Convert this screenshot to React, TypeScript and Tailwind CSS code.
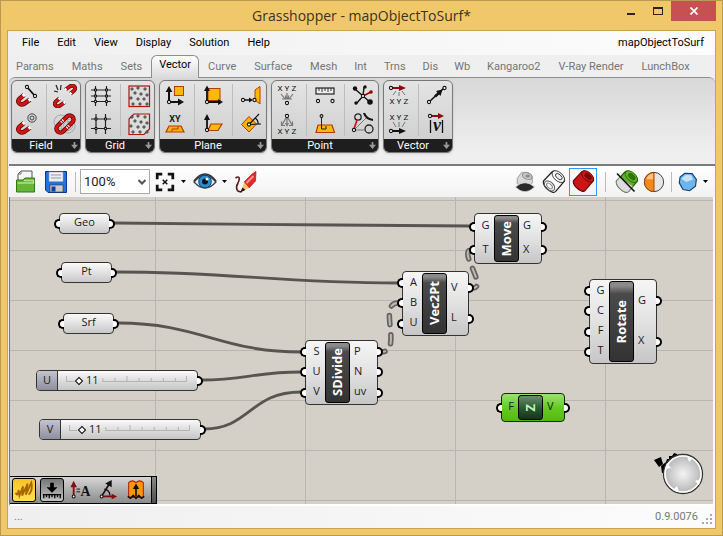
import React, { useState } from 'react';
import clsx from 'clsx';

const menus = ['File', 'Edit', 'View', 'Display', 'Solution', 'Help'];

const tabs = [
  'Params', 'Maths', 'Sets', 'Vector', 'Curve', 'Surface', 'Mesh', 'Int',
  'Trns', 'Dis', 'Wb', 'Kangaroo2', 'V-Ray Render', 'LunchBox',
];

/* ---------- small drawing helpers ---------- */

const Dot = ({ x, y, r = 1.6 }: { x: number; y: number; r?: number }) => (
  <circle cx={x} cy={y} r={r} fill="#fff" stroke="#111" strokeWidth="1.1" />
);

const Arrow = ({ d, head, color = '#111', w = 1.8 }: { d: string; head: string; color?: string; w?: number }) => (
  <>
    <path d={d} stroke={color} strokeWidth={w} fill="none" />
    <path d={head} fill={color} />
  </>
);

const Xyz = ({ y }: { y: number }) => (
  <>
    {['X', 'Y', 'Z'].map((c, i) => (
      <text key={c} x={5 + i * 7} y={y} fontSize="8" textAnchor="middle" fill="#111" fontFamily="Roboto, sans-serif">
        {c}
      </text>
    ))}
  </>
);

const Magnet = () => (
  <g fill="none">
    <path d="M9 11 L4.6 14.6 C1.5 18 5 22 9.5 19.6 L15 15.6" stroke="#5c0808" strokeWidth="4.6" />
    <path d="M8.6 11.4 L4.6 14.6 C1.5 18 5 22 9.5 19.6 L14.6 15.9" stroke="#d21414" strokeWidth="3" />
    <path d="M9.4 10.6 L7.8 12 M15.4 15.2 L13.6 16.6" stroke="#fff" strokeWidth="3.2" />
  </g>
);

const Scatter = () => (
  <>
    {[[5, 5], [11, 4], [18, 5], [8, 9], [14, 10], [20, 11], [4, 14], [11, 15], [17, 15], [6, 20], [13, 20], [20, 20]].map(([x, y]) => (
      <circle key={`${x}-${y}`} cx={x} cy={y} r="1.1" fill="#fff" stroke="#111" strokeWidth="0.9" />
    ))}
  </>
);

const Icon = ({ children, className = 'size-6' }: { children: React.ReactNode; className?: string }) => (
  <svg viewBox="0 0 24 24" className={clsx('shrink-0', className)} fill="none" aria-hidden="true">
    {children}
  </svg>
);

const DownArrows = () => (
  <g stroke="#777" strokeWidth="1.2">
    <path d="M6 10 L10 15 M12 9 V14 M18 10 L14 15" />
    <path d="M7 15 H10.5 V11.5 M17 15 H13.5 V11.5 M10.5 12.5 L12 15 L13.5 12.5" />
  </g>
);

const UpArrows = () => (
  <g stroke="#777" strokeWidth="1.2">
    <path d="M11 6 L7 13 M12 6 V13 M13 6 L17 13" />
    <path d="M6.5 9.5 V13.5 H10 M17.5 9.5 V13.5 H14 M10.5 11 L12 13.5 L13.5 11" />
  </g>
);

/* ---------- ribbon icons ---------- */

const icons: Record<string, React.ReactNode> = {
  'Line charge': (
    <>
      <Magnet />
      <path d="M12 3 L20 12" stroke="#111" strokeWidth="1.8" />
      <Dot x={12} y={3} />
      <Dot x={20} y={12} />
    </>
  ),
  'Point charge': (
    <>
      <Magnet />
      <g stroke="#444">
        <circle cx="17" cy="6" r="4.2" />
        <circle cx="17" cy="6" r="2" />
      </g>
    </>
  ),
  'Break field': (
    <>
      <g transform="translate(-1 5) scale(0.85)"><Magnet /></g>
      <g transform="rotate(180 12 12) translate(-1 5) scale(0.85)"><Magnet /></g>
      <path d="M3 1 L5 6 M8 1 L7.5 6 M1 7 L5 8" stroke="#222" strokeWidth="1.2" />
    </>
  ),
  'Merge fields': (
    <>
      <g stroke="#999" strokeWidth="0.8">
        <circle cx="8" cy="10" r="7" />
        <circle cx="15" cy="14" r="7" />
        <circle cx="15" cy="14" r="4.5" />
      </g>
      <g transform="rotate(-45 12 12)">
        <rect x="1.5" y="8" width="21" height="8" rx="4" stroke="#5c0808" strokeWidth="4.4" />
        <rect x="1.5" y="8" width="21" height="8" rx="4" stroke="#d21414" strokeWidth="2.8" />
        <path d="M10.5 8 H13.5 M10.5 16 H13.5" stroke="#fff" strokeWidth="2.8" />
        <path d="M12 6 V10 M12 14 V18" stroke="#5c0808" />
      </g>
    </>
  ),
  'Rectangular grid': (
    <>
      <path d="M2 6 H22 M2 12 H22 M2 17.5 H22 M6.5 2 V22 M17.5 2 V22" stroke="#222" strokeWidth="1.2" />
      {[6, 12, 17.5].map((y) => (
        <React.Fragment key={y}><Dot x={6.5} y={y} r={1.1} /><Dot x={17.5} y={y} r={1.1} /></React.Fragment>
      ))}
    </>
  ),
  'Square grid': (
    <>
      <path d="M2 7 H22 M2 16.5 H22 M7 2 V22 M16.5 2 V22" stroke="#222" strokeWidth="1.2" />
      {[7, 16.5].map((y) => (
        <React.Fragment key={y}><Dot x={7} y={y} r={1.1} /><Dot x={16.5} y={y} r={1.1} /></React.Fragment>
      ))}
    </>
  ),
  'Populate 2D': (
    <>
      <rect x="2" y="2" width="20.5" height="20.5" fill="#dcdcdc" stroke="#b01212" strokeWidth="1.2" />
      <Scatter />
    </>
  ),
  'Populate 3D': (
    <>
      <path d="M2 7 L7 2 H22.5 V17 L17 22.5 H2 Z" fill="#dcdcdc" stroke="#b01212" strokeWidth="1.2" />
      <Scatter />
    </>
  ),
  'Plane normal': (
    <>
      <rect x="11.5" y="2.5" width="9" height="9" fill="#ffb800" stroke="#b83a00" />
      <Arrow d="M6 16 V6" head="M2.6 8 L6 2 L9.4 8 Z" w={2} />
      <Arrow d="M7 18 H16" head="M15 14.6 L21 18 L15 21.4 Z" w={2} />
      <Dot x={6} y={18} />
    </>
  ),
  'XY plane': (
    <>
      <text x="12" y="10" fontSize="9" fontWeight="bold" textAnchor="middle" fill="#222" fontFamily="Roboto, sans-serif">XY</text>
      <path d="M6 14 H18 L21 20 H3 Z" fill="#ffb000" stroke="#b83a00" strokeWidth="1.2" />
      <path d="M9 20 V17 H15 V14" stroke="#b83a00" />
    </>
  ),
  'Plane origin': (
    <>
      <rect x="7" y="4.5" width="12" height="12" fill="#ffb800" stroke="#b83a00" />
      <Arrow d="M6 17 V6" head="M3 7 L6 1.5 L9 7 Z" />
      <Arrow d="M7 18 H17" head="M17 15 L22 18 L17 21 Z" />
      <Dot x={6} y={18} />
    </>
  ),
  'Plane offset': (
    <>
      <path d="M10 12 H21 L17 18.5 H7 Z" fill="#ffb800" stroke="#b83a00" strokeWidth="1.2" />
      <Arrow d="M6 17 V6" head="M3 8 L6 2 L9 8 Z" />
      <Dot x={6} y={18} />
    </>
  ),
  'Align plane': (
    <>
      <path d="M21 2.5 V20 L16 16 V6 Z" fill="#ffb800" stroke="#b83a00" />
      <Arrow d="M4 16 H11" head="M10 13.4 L14 16 L10 18.6 Z" w={1.4} />
      <Dot x={4} y={16} />
      <Dot x={15.5} y={16} />
    </>
  ),
  'Rotate plane': (
    <>
      <path d="M10 4.5 L17.5 12 L10 20 L2.5 12.5 Z" fill="#ffb000" stroke="#b83a00" />
      <path d="M10 12.5 L20 2 M10 12.5 L22 12 M16 6 Q19.5 8 19 12" stroke="#111" strokeWidth="1.1" />
      <Dot x={10} y={12.5} />
    </>
  ),
  Deconstruct: (<><Xyz y={7} /><DownArrows /><Dot x={12} y={19} /></>),
  'Construct point': (<><UpArrows /><Dot x={12} y={4} /><Xyz y={22} /></>),
  Distance: (
    <>
      <rect x="3" y="4" width="18" height="6" fill="#eee" stroke="#222" strokeWidth="1.2" />
      <path d="M6 4 V7 M9 4 V8 M12 4 V7 M15 4 V8 M18 4 V7" stroke="#222" strokeWidth="0.9" />
      <Dot x={5} y={17} />
      <Dot x={19.5} y={17} />
    </>
  ),
  'Project point': (
    <>
      <path d="M5 13 H19 L21.5 20.5 H3 Z" fill="#ffb800" stroke="#b83a00" strokeWidth="1.2" />
      <path d="M8.5 4 V17 H13 V14" stroke="#222" />
      <Dot x={8.5} y={4} r={1.4} />
    </>
  ),
  'Closest points': (
    <>
      <path d="M12 12 L4 5 M12 12 L13 3 M12 12 L5 20 M12 12 L20 19" stroke="#111" strokeWidth="1.4" />
      <path d="M12 12 L20 8" stroke="#900" strokeWidth="1.4" />
      <g fill="#111">
        <circle cx="4" cy="4.5" r="2.2" /><circle cx="14" cy="3" r="1.7" />
        <circle cx="5" cy="19" r="1.7" /><circle cx="19" cy="18" r="2.8" />
      </g>
      <circle cx="20" cy="8" r="1.8" fill="#900" />
      <Dot x={12} y={12} />
    </>
  ),
  'Pull point': (
    <>
      <circle cx="7" cy="5" r="3.2" stroke="#222" strokeWidth="1.3" />
      <circle cx="18" cy="17" r="4" stroke="#222" strokeWidth="1.3" />
      <path d="M13 1 Q15 7 22 8" stroke="#111" strokeWidth="2.2" />
      <path d="M3 18 L15 6 M4 18 H14" stroke="#777" />
      <path d="M3 17 L6 8" stroke="#d01010" strokeWidth="1.7" />
      <Dot x={3} y={18} />
    </>
  ),
  'Deconstruct vector': (
    <>
      <Arrow d="M4 4 H14" head="M12 1 L19 4 L12 7 Z" color="#8c0c0c" w={2} />
      <Dot x={4} y={4} />
      <path d="M9 7 L6 11 M12 8 V12 M15 7 L18 11" stroke="#777" />
      <Xyz y={20} />
    </>
  ),
  'Vector XYZ': (
    <>
      <Xyz y={8} />
      <path d="M6 10 L9 15 M12 10 V15 M18 10 L15 15" stroke="#777" />
      <Arrow d="M4 19 H14" head="M12 16 L19 19 L12 22 Z" w={2} />
      <Dot x={4} y={19} />
    </>
  ),
  'Vector 2Pt': (
    <>
      <path d="M4 18 L19 4" stroke="#111" strokeWidth="1.6" />
      <path d="M10 12.5 L15 8" stroke="#111" strokeWidth="2.6" />
      <path d="M17.5 5.5 L15.5 12 L11 7 Z" fill="#111" />
      <Dot x={4} y={18} />
      <Dot x={19.5} y={4} />
    </>
  ),
  Amplitude: (
    <>
      <Arrow d="M5 4 H14" head="M13 1 L19 4 L13 7 Z" color="#8c0c0c" w={2} />
      <Dot x={5} y={4} />
      <path d="M5.5 8 V21 M17.5 8 V21" stroke="#111" strokeWidth="1.3" />
      <text x="12" y="19" fontSize="18" fontStyle="italic" fontWeight="bold" textAnchor="middle" fill="#111" fontFamily="Liberation Serif, serif">v</text>
    </>
  ),
};

const groups = [
  { name: 'Field', cols: [['Line charge', 'Point charge'], ['Break field', 'Merge fields']] },
  { name: 'Grid', cols: [['Rectangular grid', 'Square grid'], ['Populate 2D', 'Populate 3D']] },
  { name: 'Plane', cols: [['Plane normal', 'XY plane'], ['Plane origin', 'Plane offset'], ['Align plane', 'Rotate plane']] },
  { name: 'Point', cols: [['Deconstruct', 'Construct point'], ['Distance', 'Project point'], ['Closest points', 'Pull point']] },
  { name: 'Vector', cols: [['Deconstruct vector', 'Vector XYZ'], ['Vector 2Pt', 'Amplitude']] },
];

const TitleBar = () => (
  <header className="relative flex h-[30px] shrink-0 items-start justify-center">
    <h1 className="pt-[5px] font-['Open_Sans',sans-serif] text-[14px] leading-5 text-[#3a3222]">
      Grasshopper - mapObjectToSurf*
    </h1>
    <div className="absolute top-0 right-0 flex h-5">
      <button aria-label="Minimize" className="flex w-7 items-end justify-center pb-1.5">
        <span className="h-[2px] w-2 bg-[#2b2519]" />
      </button>
      <button aria-label="Maximize" className="flex w-[26px] items-center justify-center">
        <span className="h-2 w-2.5 border border-t-2 border-[#2b2519]" />
      </button>
      <button aria-label="Close" className="flex w-[45px] items-center justify-center bg-[#c75050]">
        <svg viewBox="0 0 8 8" className="size-2" stroke="#fff" strokeWidth="1.7">
          <path d="M0.5 0.5 L7.5 7.5 M7.5 0.5 L0.5 7.5" />
        </svg>
      </button>
    </div>
  </header>
);

const MenuBar = () => (
  <nav className="flex h-6 shrink-0 items-center bg-linear-to-r from-[#f0f0f0] to-[#fcfcfc] pr-[11px] pl-1 text-[11px] text-black">
    {menus.map((m) => (
      <button key={m} className="px-[9px]">{m}</button>
    ))}
    <span className="ml-auto">mapObjectToSurf</span>
  </nav>
);

interface TabBarProps {
  active: string;
  onSelect: (tab: string) => void;
}

const TabBar: React.FC<TabBarProps> = ({ active, onSelect }) => (
  <div role="tablist" className="relative z-10 -mb-px flex h-[23px] shrink-0 items-end text-[11px] whitespace-nowrap text-[#757575]">
    {tabs.map((t) => (
      <button
        key={t}
        role="tab"
        aria-selected={t === active}
        onClick={() => onSelect(t)}
        className={clsx(
          t === active
            ? 'h-[23px] rounded-t-md border border-b-0 border-[#8e8e8e] bg-linear-to-b from-white to-[#dadada] px-[7px] pb-1 text-black'
            : 'h-[22px] first:pl-[7px]',
          t !== active && (t.length > 3 ? 'px-[9px]' : 'px-2')
        )}
      >
        {t}
      </button>
    ))}
  </div>
);

const Ribbon = () => (
  <section className="shrink-0 pb-[11px]">
    <div className="flex gap-1 rounded-t-md border-t border-[#8e8e8e] bg-linear-to-b from-[#d8d8d8] to-[#efefef] pt-0.5 pl-0.5">
      {groups.map((g) => (
        <div key={g.name} className="overflow-hidden rounded-md border border-[#777] bg-linear-to-b from-[#e4e4e4] to-[#cccccc] shadow-sm">
          <div className="flex py-[3px] pr-[3px] pl-[3px]">
            {g.cols.map((col, i) => (
              <div key={i} className="flex flex-col gap-1 border-[#bdbdbd] not-first:border-l not-first:pl-1.5 not-last:pr-[7px]">
                {col.map((name) => (
                  <button key={name} aria-label={name} title={name}>
                    <Icon>{icons[name]}</Icon>
                  </button>
                ))}
              </div>
            ))}
          </div>
          <div className="relative flex h-[13px] items-center justify-center bg-[#1e1e1e] text-[11px] leading-none text-white">
            <span className="pr-2.5">{g.name}</span>
            <svg viewBox="0 0 8 8" className="absolute right-[2px] size-[7px]" fill="#999">
              <path d="M3 0 H5 V3 H8 L4 8 L0 3 H3 Z" />
            </svg>
          </div>
        </div>
      ))}
    </div>
  </section>
);

/* ---------- canvas toolbar ---------- */

const Caret = () => (
  <svg viewBox="0 0 5 3" className="h-[3px] w-[5px]" fill="#000"><path d="M0 0 H5 L2.5 3 Z" /></svg>
);

const Separator = () => <span className="h-5 w-px bg-[#bbb]" />;

const Tube = ({ fill, inner, stroke }: { fill: string; inner: string; stroke: string }) => (
  <>
    <path d="M1.5 11 L10 2 C13 -1 23 5.5 22.5 11 L13.5 21.5 C11 25 0 16.5 1.5 11 Z" fill={fill} stroke={stroke} strokeWidth="1.2" />
    <ellipse cx="16.3" cy="6.6" rx="7.4" ry="4.3" transform="rotate(42 16.3 6.6)" fill={fill} stroke={stroke} strokeWidth="0.8" />
    <ellipse cx="16.8" cy="6.6" rx="4" ry="2.2" transform="rotate(42 16.8 6.6)" fill={inner} stroke={stroke} strokeWidth="0.8" />
  </>
);

const Toolbar = () => (
  <div className="flex h-[33px] shrink-0 items-center border-t-2 border-[#7b7b7b] bg-linear-to-b from-white to-[#f2f2f2] pl-[5px]">
    <button aria-label="Open">
      <Icon>
        <path d="M4 12 V4 L7 1 H18 V12" fill="#f6f6f6" stroke="#555" />
        <path d="M4 4 H7 V1" stroke="#777" />
        <path d="M2.5 22 V10 H9 L11 8 H20.5 V22 Z" fill="#68b436" stroke="#2c7a12" />
        <path d="M3.5 13 H19.5 V10.5 H10" stroke="#b3e08c" strokeWidth="1.5" />
      </Icon>
    </button>
    <button aria-label="Save" className="ml-1.5">
      <Icon>
        <path d="M1.5 1.5 H22.5 V22.5 H4 L1.5 20 Z" fill="#2272e0" stroke="#0b3a94" />
        <rect x="5" y="2" width="14" height="9.5" fill="#eee" stroke="#9ab" strokeWidth="0.5" />
        <path d="M7 5 H17 M7 8 H17" stroke="#999" />
        <rect x="6" y="15" width="13" height="7" fill="#ccc" stroke="#333" strokeWidth="0.6" />
        <rect x="7.5" y="16.5" width="4" height="5" fill="#123f9a" />
      </Icon>
    </button>
    <div className="ml-[7px] flex items-center gap-1">
      <Separator />
      <div className="relative">
        <select
          aria-label="Zoom"
          defaultValue="100%"
          className="block h-[25px] w-[70px] appearance-none border border-[#aaa] bg-white pl-[3px] text-[13px] text-[#222]"
        >
          <option>50%</option>
          <option>100%</option>
          <option>200%</option>
        </select>
        <svg viewBox="0 0 8 6" className="pointer-events-none absolute top-[10px] right-1 h-[6px] w-2" fill="none" stroke="#555" strokeWidth="2">
          <path d="M0.5 1 L4 4.5 L7.5 1" />
        </svg>
      </div>
    </div>
    <button aria-label="Zoom extents" className="ml-1 flex items-center gap-[5px]">
      <Icon className="size-[22px]">
        <path d="M3.5 9 V3.5 H9 M15 3.5 H20.5 V9 M20.5 15 V20.5 H15 M9 20.5 H3.5 V15" stroke="#111" strokeWidth="3" />
        <path d="M9.5 9.5 L14.5 14.5 M14.5 9.5 L9.5 14.5" stroke="#111" strokeWidth="1.6" />
      </Icon>
      <Caret />
    </button>
    <button aria-label="Named views" className="ml-[7px] flex items-center gap-[5px]">
      <Icon>
        <path d="M1 12 Q12 -1 23 12 Q12 24 1 12 Z" fill="#e9eef2" stroke="#3b4750" strokeWidth="1.3" />
        <circle cx="12" cy="11.5" r="6.3" fill="#2b90d0" stroke="#0c4470" />
        <circle cx="12" cy="11.5" r="3" fill="#06131d" />
        <circle cx="14" cy="9" r="1.5" fill="#fff" />
        <path d="M1 11 Q12 -3 23 11" stroke="#333" strokeWidth="1.7" />
      </Icon>
      <Caret />
    </button>
    <button aria-label="Sketch" className="ml-1.5">
      <Icon>
        <path d="M2.5 8 C7 5 7 9 5 13 C2 18 4 23 9 21.5" stroke="#5b1717" strokeWidth="1.6" />
        <path d="M11 12 L19 4 L23 1.500 L22.5 11 L16 18 Z" fill="#e42828" stroke="#9b1111" strokeWidth="0.6" />
        <path d="M13.5 13 L20.5 6" stroke="#ff9494" strokeWidth="2" />
        <path d="M11 12 L16 18 L8.5 21.5 Z" fill="#f2c36b" />
        <path d="M9.5 17.5 L12.5 20 L7 22.5 Z" fill="#331010" />
      </Icon>
    </button>

    <div className="ml-auto flex items-center pr-px">
      <button aria-label="No preview" className="mr-[6px]">
        <Icon className="size-[22px]">
          <path d="M3.5 14 V8 L8 2 C12 0 20 3 20 7 V13 L16 17 Z" fill="#d9d9d9" stroke="#999" />
          <ellipse cx="14.5" cy="5.5" rx="5.5" ry="3.5" transform="rotate(20 14.5 5.5)" fill="#c4c4c4" stroke="#888" />
          <ellipse cx="15" cy="5.5" rx="2.5" ry="1.5" fill="#888" />
          <path d="M1.5 17.5 Q12 8 22.5 17.5 Q12 28 1.5 17.5 Z" fill="#2a2a2a" stroke="#eee" strokeWidth="0.8" />
        </Icon>
      </button>
      <button aria-label="Wireframe preview" className="mr-[3px]">
        <Icon>
          <Tube fill="#fafafa" inner="#eee" stroke="#222" />
          <ellipse cx="7.5" cy="16" rx="6" ry="4" transform="rotate(42 7.5 16)" stroke="#555" />
          <ellipse cx="7.5" cy="16" rx="3.5" ry="2" transform="rotate(42 7.5 16)" stroke="#888" />
        </Icon>
      </button>
      <button aria-label="Shaded preview" aria-pressed="true" className="mr-2 flex size-7 items-center justify-center border border-[#3297fd]">
        <Icon className="size-[23px]"><Tube fill="#cc1515" inner="#7d0808" stroke="#5e0606" /></Icon>
      </button>
      <Separator />
      <button aria-label="Selected preview" className="mr-1 ml-[9px]">
        <Icon>
          <Tube fill="#5eb51f" inner="#2f7a08" stroke="#285f0a" />
          <path d="M5 7 L1.5 11 C0 16.5 11 25 13.5 21.5 L18 16 Z" fill="#ddd" stroke="#888" />
          <path d="M2 3.5 L19.5 21.5" stroke="#111" strokeWidth="1.6" />
        </Icon>
      </button>
      <button aria-label="Document preview" className="mr-1.5">
        <Icon className="size-[22px]">
          <circle cx="12" cy="12" r="10.5" fill="#e6e6e6" stroke="#333" />
          <path d="M12 1.5 A10.5 10.5 0 0 0 12 22.5 Z" fill="#ef8b1d" stroke="#9b3d05" />
          <path d="M3.5 9 Q6 3 11 2.8 V9 Z" fill="#ffc27a" />
        </Icon>
      </button>
      <Separator />
      <button aria-label="Mesh quality" className="mr-[6px] ml-1.5 flex items-center gap-[5px]">
        <Icon className="size-5">
          <path d="M8 1.5 L17 2 L22 9 L21 17 L14 22.5 L6 21 L1.5 13 L2.5 6 Z" fill="#6fb4ee" stroke="#14406f" strokeWidth="1.4" />
          <path d="M4 8 L9 3.5 L16 4 L18 9 L10 12 Z" fill="#c4e2fb" />
        </Icon>
        <Caret />
      </button>
    </div>
  </div>
);

/* ---------- definition canvas ---------- */

const Port = ({ side }: { side: 'in' | 'out' }) => (
  <span
    className={clsx(
      'absolute top-1/2 h-[10px] w-1.5 -translate-y-1/2 border-2 border-black bg-white',
      side === 'in' ? '-left-[6px] rounded-l-full border-r-0' : '-right-[6px] rounded-r-full border-l-0'
    )}
  />
);

interface ComponentNode {
  name: string;
  at: string;
  inputs: string[];
  outputs: string[];
  selected?: boolean;
}

const components: ComponentNode[] = [
  { name: 'Move', at: 'left-[464px] top-[16px] h-[51px] w-[68px]', inputs: ['G', 'T'], outputs: ['G', 'X'] },
  { name: 'Vec2Pt', at: 'left-[392px] top-[74px] h-[65px] w-[67px]', inputs: ['A', 'B', 'U'], outputs: ['V', 'L'] },
  { name: 'SDivide', at: 'left-[295px] top-[143px] h-[65px] w-[73px]', inputs: ['S', 'U', 'V'], outputs: ['P', 'N', 'uv'] },
  { name: 'Rotate', at: 'left-[579px] top-[82px] h-[85px] w-[68px]', inputs: ['G', 'C', 'F', 'T'], outputs: ['G', 'X'] },
  { name: 'Z', at: 'left-[491px] top-[196px] h-[29px] w-[64px]', inputs: ['F'], outputs: ['V'], selected: true },
];

const params = [
  { name: 'Geo', at: 'left-[49px] top-[16px]' },
  { name: 'Pt', at: 'left-[51px] top-[65px]' },
  { name: 'Srf', at: 'left-[53px] top-[116px]' },
];

const sliders = [
  { name: 'U', at: 'left-[26px] top-[173px]' },
  { name: 'V', at: 'left-[29px] top-[222px]' },
];

const wires = [
  'M104 26 C230 26 340 29 460 29',
  'M106 75 C220 75 270 86 388 86',
  'M108 126 C190 126 210 155 291 155',
  'M191 183 C235 183 245 175 291 175',
  'M194 232 C240 232 240 195 291 195',
];

const dashedWires = [
  'M371 155 C394 155 367 106 388 106',
  'M463 91 C478 91 448 53 461 53',
];

const ParamNode = ({ name, at }: { name: string; at: string }) => (
  <div className={clsx('absolute flex h-[21px] w-[51px] items-center justify-center rounded border border-[#333] bg-linear-to-b from-[#fafafa] via-[#e2e2e2] to-[#c8c8c8] pb-1', at)}>
    <Port side="in" />
    {name}
    <Port side="out" />
  </div>
);

const SliderNode = ({ name, at }: { name: string; at: string }) => {
  const [value, setValue] = useState(11);
  return (
    <div className={clsx('absolute flex h-[21px] w-[162px] rounded border border-[#333] bg-linear-to-b from-[#fafafa] via-[#dedede] to-[#c6c6c6]', at)}>
      <label htmlFor={`slider-${name}`} className="flex w-[21px] items-center justify-center rounded-l-[3px] border-r border-[#333] bg-linear-to-b from-[#c4c4d0] to-[#8f8f9f] pb-0.5">
        {name}
      </label>
      <div className="relative mr-2.5 ml-2 flex-1">
        <svg viewBox="0 0 120 19" preserveAspectRatio="none" className="absolute inset-0 h-full w-full" stroke="#b4b4b4">
          <path d="M0.5 5 V10.5 H8 M36 10.5 H119.5 M36.5 7 V10.5 M48.5 7 V10.5 M60.5 5 V10.5 M72.5 7 V10.5 M84.5 7 V10.5 M96.5 7 V10.5 M108.5 7 V10.5 M119.5 5 V10.5" fill="none" />
        </svg>
        <input
          id={`slider-${name}`}
          type="range"
          min={0}
          max={128}
          value={value}
          onChange={(e) => setValue(Number(e.target.value))}
          className="absolute inset-0 h-full w-full appearance-none bg-transparent [&::-webkit-slider-thumb]:size-[6px] [&::-webkit-slider-thumb]:rotate-45 [&::-webkit-slider-thumb]:appearance-none [&::-webkit-slider-thumb]:border-[1.5px] [&::-webkit-slider-thumb]:border-black [&::-webkit-slider-thumb]:bg-white"
        />
        <span className="pointer-events-none absolute inset-y-0 left-5 flex items-center pb-0.5">{value}</span>
      </div>
      <Port side="out" />
    </div>
  );
};

const ComponentBox: React.FC<ComponentNode> = ({ name, at, inputs, outputs, selected }) => (
  <div
    className={clsx(
      'absolute flex rounded border bg-linear-to-b py-px',
      selected ? 'border-[#0c3000] from-[#9be36a] via-[#64cb1f] to-[#55b813]' : 'border-[#333] from-[#f6f6f6] via-[#e2e2e2] to-[#c6c6c6]',
      at
    )}
  >
    <div className={clsx('flex flex-col', selected ? 'w-4' : 'w-[19px]')}>
      {inputs.map((p) => (
        <div key={p} className="relative flex flex-1 items-center justify-center pb-1 pl-0.5">
          <Port side="in" />
          {p}
        </div>
      ))}
    </div>
    <div
      className={clsx(
        'flex w-[25px] items-center justify-center rounded-[3px] border border-black bg-linear-to-b',
        selected ? 'from-[#6b8f6b] via-[#2f5a33] to-[#16331a]' : 'from-[#8a8a8a] from-5% via-[#4a4a4a] via-15% to-[#333333]'
      )}
    >
      <span className={clsx('rotate-180 text-[13px] leading-none font-bold [writing-mode:vertical-rl]', selected ? 'text-[#b8f5b0]' : 'text-white')}>
        {name}
      </span>
    </div>
    <div className="flex flex-1 flex-col">
      {outputs.map((p) => (
        <div key={p} className="relative flex flex-1 items-center pb-1 pl-1">
          {p}
          <Port side="out" />
        </div>
      ))}
    </div>
  </div>
);

const Compass = () => (
  <svg viewBox="0 0 50 44" className="absolute right-[9px] bottom-2 h-11 w-[50px]" fill="none">
    <path d="M0 8 L7 5 L9 12 L5 15 Z M8 21 L7 14 L12 10 L13 7 L15 7 L15 4 L18 4 L20 1 L23 2 L24 8 L12 20 Z" fill="#000" />
    <defs>
      <radialGradient id="dial">
        <stop offset="0" stopColor="#f4f4f4" />
        <stop offset="1" stopColor="#b4b4b4" />
      </radialGradient>
    </defs>
    <circle cx="29" cy="22" r="19.5" fill="url(#dial)" stroke="#333" strokeWidth="1.3" />
    <circle cx="29" cy="22" r="18" stroke="#fff" strokeWidth="1.6" />
    <path d="M33 4 L39 6 L35 10 Z M47 27 L45 33 L41 29 Z M25 40 L19 38 L23 34 Z M11 17 L13 11 L17 16 Z" fill="#fff" />
  </svg>
);

const MarkovBar = () => (
  <div className="absolute bottom-0 -left-px flex h-7 w-[148px] items-center border border-black bg-linear-to-b from-[#d6d6d6] to-[#8b8b8b] pl-0.5">
    <button aria-label="Scribble" className="rounded-[3px] border border-black bg-linear-to-b from-[#f7c326] to-[#ffe04d]">
      <Icon className="size-[22px]">
        <path d="M3 15 Q5 20 6 12 L7 18 L11 8 L10 18 L16 5 L14 17 L20 4 Q22 12 17 17" stroke="#a86505" strokeWidth="2" />
      </Icon>
    </button>
    <button aria-label="Bake" className="ml-1 rounded-[3px] border border-black bg-linear-to-b from-[#777] to-[#c4c4c4]">
      <Icon className="size-[22px]">
        <path d="M10 4 H14 V9 H18 L12 15 L6 9 H10 Z" fill="#000" />
        <path d="M2 17 H22 M3 17 V21 M6 17 V20 M9 17 V21 M12 17 V20 M15 17 V21 M18 17 V20 M21 17 V21" stroke="#000" strokeWidth="1.4" />
      </Icon>
    </button>
    <button aria-label="Amplitude" className="ml-1.5">
      <Icon className="size-[22px]">
        <Arrow d="M4 18 V7" head="M0.5 9 L4 2 L7.5 9 Z" color="#850c0c" w={2} />
        <Dot x={4} y={19} />
        <path d="M7 11 H11 M7 14 H11" stroke="#111" />
        <text x="17" y="19" fontSize="15" fontWeight="bold" textAnchor="middle" fill="#111" fontFamily="Liberation Serif, serif">A</text>
      </Icon>
    </button>
    <button aria-label="Rotate" className="ml-[5px]">
      <Icon className="size-[22px]">
        <Arrow d="M5 19 L13 6" head="M9 5 L16 1 L16 9 Z" />
        <Arrow d="M5 19 H17" head="M16 16 L22 19 L16 22 Z" color="#850c0c" w={2} />
        <path d="M8 11 Q14 12 14 18" stroke="#111" strokeWidth="1.3" />
        <Dot x={5} y={19} />
      </Icon>
    </button>
    <button aria-label="Extrude" className="ml-[6px]">
      <Icon className="size-[22px]">
        <path d="M4 20 V4 Q8 0 12 4 Q16 0 20 4 V20 Z" fill="#ff9800" stroke="#b02800" strokeWidth="1.2" />
        <path d="M3 19 L6 21 L9 18 L12 21 L15 18 L18 21 L21 19" stroke="#111" strokeWidth="1.8" />
        <Arrow d="M12 19 V9" head="M8.5 11 L12 5 L15.5 11 Z" />
      </Icon>
    </button>
    <span className="ml-auto h-full w-[5px] border-l border-black bg-linear-to-b from-[#888] to-[#4f4f4f]" />
  </div>
);

const Canvas = () => (
  <main className="relative min-h-0 flex-1 overflow-hidden border-r-2 border-b-2 border-l border-r-white border-b-white border-l-[#777] bg-[#d4d0c8] font-['Open_Sans',sans-serif] text-[11px] leading-none text-[#1b1b1b]">
    <svg className="absolute inset-0 h-full w-full" fill="none">
      <defs>
        <pattern id="grid" x="145" y="3" width="150" height="50" patternUnits="userSpaceOnUse">
          <path d="M0.5 0 V50 M0 0.5 H150" stroke="#b9b6af" />
        </pattern>
      </defs>
      <rect width="100%" height="100%" fill="url(#grid)" />
      {wires.map((d) => <path key={d} d={d} stroke="#575550" strokeWidth="2.8" />)}
      {dashedWires.map((d) => (
        <g key={d} strokeLinecap="round" strokeDasharray="9 10" strokeDashoffset="5">
          <path d={d} stroke="#666460" strokeWidth="5.5" />
          <path d={d} stroke="#bcb9b2" strokeWidth="2" />
        </g>
      ))}
    </svg>
    {params.map((p) => <ParamNode key={p.name} {...p} />)}
    {sliders.map((s) => <SliderNode key={s.name} {...s} />)}
    {components.map((c) => <ComponentBox key={c.name} {...c} />)}
    <MarkovBar />
    <Compass />
  </main>
);

const StatusBar = () => (
  <footer className="flex h-[22px] shrink-0 items-center justify-between bg-linear-to-r from-[#efefef] to-[#fcfcfc] pr-0.5 pl-[5px] text-[11px] text-[#777]">
    <span>...</span>
    <span className="flex items-center gap-1">
      0.9.0076
      <svg viewBox="0 0 11 11" className="mt-1 size-[11px]" fill="#aaa">
        <path d="M8 0h2v2h-2z M8 4h2v2h-2z M4 4h2v2h-2z M8 8h2v2h-2z M4 8h2v2h-2z M0 8h2v2h-2z" />
      </svg>
    </span>
  </footer>
);

export default function App() {
  const [tab, setTab] = useState('Vector');

  return (
    <div className="flex h-screen flex-col border border-[#b99a52] bg-[#f0c869] px-[6px] pb-[6px] font-[Roboto,sans-serif]">
      <TitleBar />
      <div className="-mt-px flex min-h-0 flex-1 flex-col border border-[#c9a34f] bg-[#efefef] pl-px">
        <MenuBar />
        <TabBar active={tab} onSelect={setTab} />
        <Ribbon />
        <Toolbar />
        <Canvas />
        <StatusBar />
      </div>
    </div>
  );
}
